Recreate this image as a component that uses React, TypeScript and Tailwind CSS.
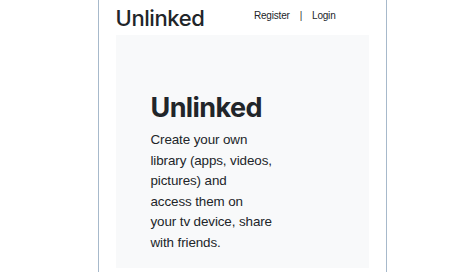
import React from 'react';

const lines = [
  'Create your own',
  'library (apps, videos,',
  'pictures) and',
  'access them on',
  'your tv device, share',
  'with friends.',
];

export default function App() {
  return (
    <div className="flex justify-center bg-white min-h-screen pl-[10px]" style={{ fontFamily: 'Inter, "Liberation Sans", Arial, sans-serif' }}>
      <div className="w-[289px] border-x border-[#a7b9cb] px-[17px] h-[272px] overflow-hidden">
        {/* Header */}
        <header className="flex items-center justify-between h-[35px]">
          <div className="text-[22px] leading-none text-[#212529] tracking-[-0.4px] pt-[1px] font-medium">Unlinked</div>
          <nav
            className="flex items-center gap-[10px] text-[10px] text-[#212529] tracking-[-0.2px] pr-[33px] pb-[5px]"
            style={{ fontFamily: '"Liberation Sans", Arial, sans-serif' }}
          >
            <span>Register</span>
            <span className="text-[#333]">|</span>
            <span>Login</span>
          </nav>
        </header>

        {/* Jumbotron */}
        <section className="bg-[#f8f9fa] h-[233px] pl-[35px] pt-[56px]">
          <h1 className="text-[27px] font-bold leading-[34px] text-[#212529] tracking-[-0.6px]">Unlinked</h1>
          <p
            className="mt-[5px] text-[13.4px] leading-[20.6px] text-[#212529] tracking-[-0.1px] whitespace-nowrap"
            style={{ fontFamily: '"Liberation Sans", Arial, sans-serif' }}
          >
            {lines.map((l, i) => (
              <React.Fragment key={i}>
                {l}
                {i < lines.length - 1 && <br />}
              </React.Fragment>
            ))}
          </p>
        </section>
      </div>
    </div>
  );
}
